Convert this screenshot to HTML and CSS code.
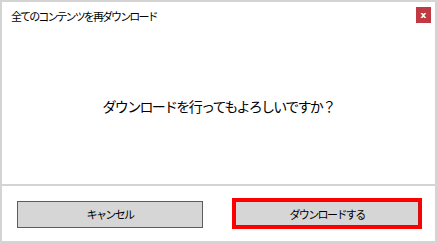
FILE: index.html
```html
<!DOCTYPE html>
<html lang="ja">
<head>
    <meta charset="UTF-8">
    <meta name="viewport" content="width=device-width, initial-scale=1.0">
    <title>全てのコンテンツを再ダウンロード</title>
    <link rel="stylesheet" href="styles.css">
</head>
<body>
    <div class="dialog">
        <header class="dialog-header">
            <div class="dialog-title">全てのコンテンツを再ダウンロード</div>
            <button class="close-btn">x</button>
        </header>

        <div class="dialog-body">
            <p class="message">ダウンロードを行ってもよろしいですか？</p>
        </div>

        <footer class="dialog-footer">
            <button class="btn btn-cancel">キャンセル</button>
            <button class="btn btn-ok">ダウンロードする</button>
        </footer>
    </div>
</body>
</html>
```

FILE: styles.css
```css
body {
    margin: 0;
    font-family: "Noto Sans CJK JP", sans-serif;
    background: #fff;
    color: #000;
}

.dialog {
    width: 437px;
    height: 243px;
    box-sizing: border-box;
    border: 2px solid #d4d4d4;
    display: flex;
    flex-direction: column;
}

.dialog-header {
    height: 26px;
    display: flex;
    justify-content: space-between;
}

.dialog-title {
    padding: 6px 0 0 9px;
    font-size: 11px;
    letter-spacing: -1.9px;
    line-height: 16px;
}

.close-btn {
    margin: 5px 4px 0 0;
    width: 15px;
    height: 16px;
    padding: 0;
    border: none;
    background: #bf3a42;
    color: #fff;
    font-family: "DejaVu Sans", sans-serif;
    font-weight: bold;
    font-size: 9px;
    line-height: 16px;
}

.dialog-body {
    flex: 1;
    display: flex;
    align-items: center;
    justify-content: center;
    border-bottom: 2px solid #d4d4d4;
}

.message {
    margin: 0;
    font-size: 14px;
    letter-spacing: -1.7px;
}

.dialog-footer {
    height: 55px;
    display: flex;
    align-items: center;
    padding: 0 13px 0 15px;
    gap: 29px;
}

.btn {
    box-sizing: border-box;
    background: #d6d6d6;
    color: #000;
    font-family: "Noto Sans CJK JP", sans-serif;
    font-size: 11px;
    letter-spacing: -1.6px;
    padding: 0;
}

.btn-cancel {
    width: 186px;
    height: 27px;
    border: 1px solid #5c5c5c;
    margin-top: 1px;
}

.btn-ok {
    width: 190px;
    height: 31px;
    border: 3px solid #f00;
    box-shadow: inset 0 0 0 1px #d01010;
}
```
